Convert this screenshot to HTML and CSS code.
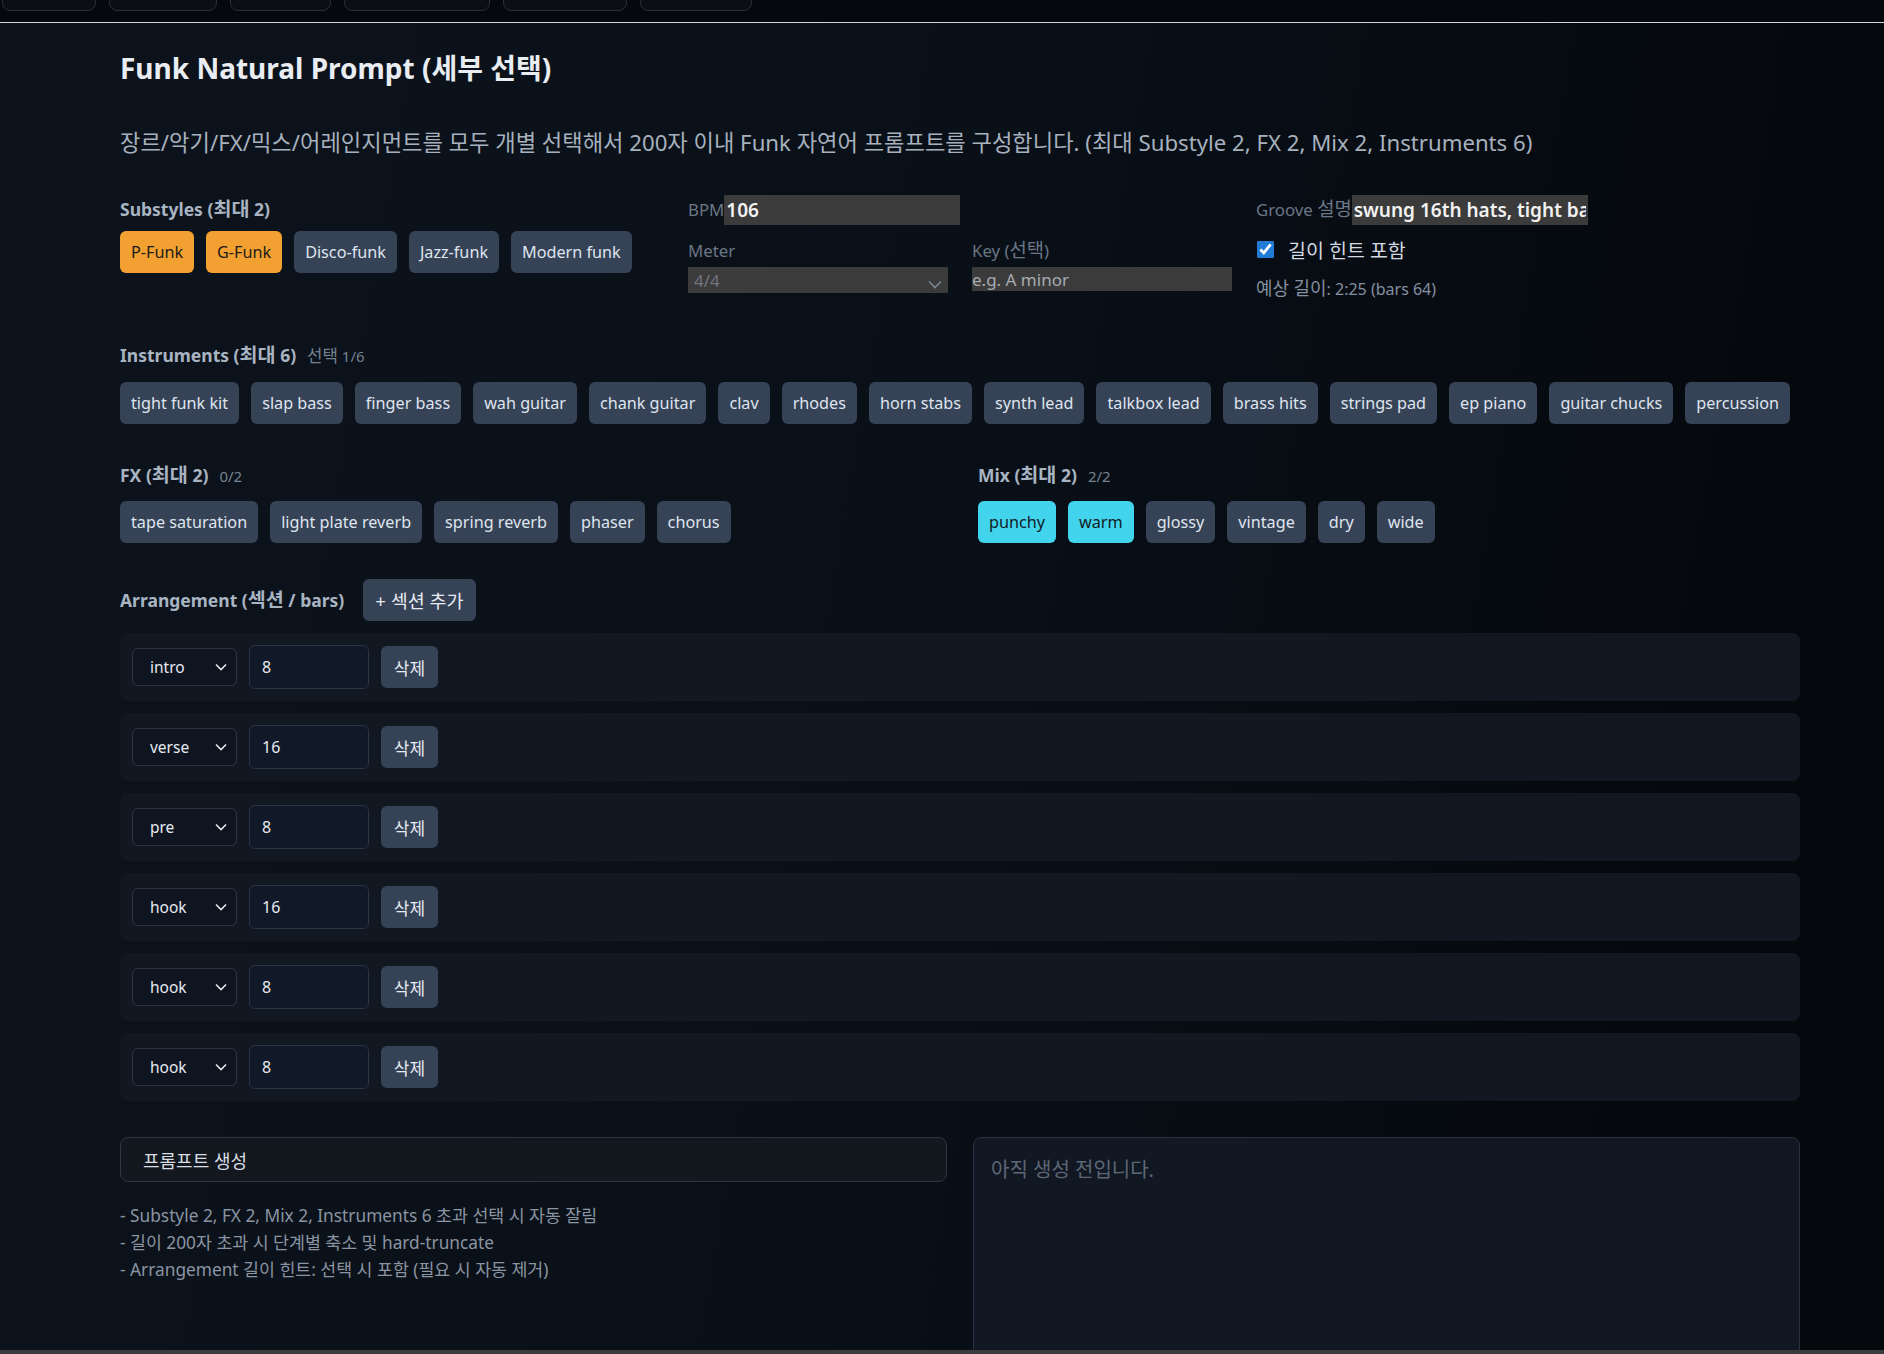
FILE: index.html
```html
<!DOCTYPE html>
<html lang="ko">
<head>
<meta charset="utf-8">
<title>Funk Natural Prompt</title>
<link rel="stylesheet" href="styles.css">
</head>
<body>
<div class="topbar">
  <div class="tabs">
    <span class="tab t1"></span><span class="tab t2"></span><span class="tab t3"></span><span class="tab t4"></span><span class="tab t5"></span><span class="tab t6"></span>
  </div>
</div>
<main class="page">
  <h1 class="title">Funk Natural Prompt (세부 선택)</h1>
  <p class="lead">장르/악기/FX/믹스/어레인지먼트를 모두 개별 선택해서 200자 이내 Funk 자연어 프롬프트를 구성합니다. (최대 Substyle 2, FX 2, Mix 2, Instruments 6)</p>

  <section class="grid3">
    <div class="col">
      <div class="label label-first">Substyles (<span class="ko">최대</span> 2)</div>
      <div class="chips">
        <button class="chip on-orange">P-Funk</button>
        <button class="chip on-orange">G-Funk</button>
        <button class="chip">Disco-funk</button>
        <button class="chip">Jazz-funk</button>
        <button class="chip">Modern funk</button>
      </div>
    </div>
    <div class="col">
      <div class="inline-field"><span class="flabel">BPM</span><input class="ginput bpm" value="106"></div>
      <div class="subgrid">
        <div>
          <div class="flabel block">Meter</div>
          <div class="selwrap meter">
            <select class="gselect"><option>4/4</option></select>
            <svg class="chev" width="14" height="9" viewBox="0 0 14 9"><path d="M1 1.5 L7 7.5 L13 1.5" fill="none" stroke="#7a8596" stroke-width="1.6"/></svg>
          </div>
        </div>
        <div>
          <div class="flabel block">Key (<span class="ko">선택</span>)</div>
          <input class="ginput key" placeholder="e.g. A minor">
        </div>
      </div>
    </div>
    <div class="col">
      <div class="inline-field"><span class="flabel">Groove <span class="ko">설명</span></span><input class="ginput groove" value="swung 16th hats, tight bass, clean chank guitar"></div>
      <label class="check"><input type="checkbox" checked><span>길이 힌트 포함</span></label>
      <div class="est"><span class="ko">예상 길이</span>: 2:25 (bars 64)</div>
    </div>
  </section>

  <section class="block-sec">
    <div class="label">Instruments (<span class="ko">최대</span> 6)<span class="count"><span class="ko">선택</span> 1/6</span></div>
    <div class="chips">
      <button class="chip">tight funk kit</button>
      <button class="chip">slap bass</button>
      <button class="chip">finger bass</button>
      <button class="chip">wah guitar</button>
      <button class="chip">chank guitar</button>
      <button class="chip">clav</button>
      <button class="chip">rhodes</button>
      <button class="chip">horn stabs</button>
      <button class="chip">synth lead</button>
      <button class="chip">talkbox lead</button>
      <button class="chip">brass hits</button>
      <button class="chip">strings pad</button>
      <button class="chip">ep piano</button>
      <button class="chip">guitar chucks</button>
      <button class="chip">percussion</button>
    </div>
  </section>

  <section class="grid2 fxmix">
    <div>
      <div class="label">FX (<span class="ko">최대</span> 2)<span class="count">0/2</span></div>
      <div class="chips">
        <button class="chip">tape saturation</button>
        <button class="chip">light plate reverb</button>
        <button class="chip">spring reverb</button>
        <button class="chip">phaser</button>
        <button class="chip">chorus</button>
      </div>
    </div>
    <div>
      <div class="label">Mix (<span class="ko">최대</span> 2)<span class="count">2/2</span></div>
      <div class="chips">
        <button class="chip on-cyan">punchy</button>
        <button class="chip on-cyan">warm</button>
        <button class="chip">glossy</button>
        <button class="chip">vintage</button>
        <button class="chip">dry</button>
        <button class="chip">wide</button>
      </div>
    </div>
  </section>

  <section class="arr">
    <div class="arr-head">
      <span class="label">Arrangement (<span class="ko">섹션</span> / bars)</span>
      <button class="btn add">+ 섹션 추가</button>
    </div>
    <div class="rows">
      <div class="row">
        <div class="selwrap sec"><select class="dselect"><option>intro</option></select><svg class="chev" width="12" height="8" viewBox="0 0 12 8"><path d="M1 1.5 L6 6.5 L11 1.5" fill="none" stroke="#e6e9ef" stroke-width="1.6"/></svg></div>
        <input class="dinput" value="8">
        <button class="btn del">삭제</button>
      </div>
      <div class="row">
        <div class="selwrap sec"><select class="dselect"><option>verse</option></select><svg class="chev" width="12" height="8" viewBox="0 0 12 8"><path d="M1 1.5 L6 6.5 L11 1.5" fill="none" stroke="#e6e9ef" stroke-width="1.6"/></svg></div>
        <input class="dinput" value="16">
        <button class="btn del">삭제</button>
      </div>
      <div class="row">
        <div class="selwrap sec"><select class="dselect"><option>pre</option></select><svg class="chev" width="12" height="8" viewBox="0 0 12 8"><path d="M1 1.5 L6 6.5 L11 1.5" fill="none" stroke="#e6e9ef" stroke-width="1.6"/></svg></div>
        <input class="dinput" value="8">
        <button class="btn del">삭제</button>
      </div>
      <div class="row">
        <div class="selwrap sec"><select class="dselect"><option>hook</option></select><svg class="chev" width="12" height="8" viewBox="0 0 12 8"><path d="M1 1.5 L6 6.5 L11 1.5" fill="none" stroke="#e6e9ef" stroke-width="1.6"/></svg></div>
        <input class="dinput" value="16">
        <button class="btn del">삭제</button>
      </div>
      <div class="row">
        <div class="selwrap sec"><select class="dselect"><option>hook</option></select><svg class="chev" width="12" height="8" viewBox="0 0 12 8"><path d="M1 1.5 L6 6.5 L11 1.5" fill="none" stroke="#e6e9ef" stroke-width="1.6"/></svg></div>
        <input class="dinput" value="8">
        <button class="btn del">삭제</button>
      </div>
      <div class="row">
        <div class="selwrap sec"><select class="dselect"><option>hook</option></select><svg class="chev" width="12" height="8" viewBox="0 0 12 8"><path d="M1 1.5 L6 6.5 L11 1.5" fill="none" stroke="#e6e9ef" stroke-width="1.6"/></svg></div>
        <input class="dinput" value="8">
        <button class="btn del">삭제</button>
      </div>
    </div>
  </section>

  <section class="grid2 bottom">
    <div>
      <button class="gen">프롬프트 생성</button>
      <ul class="notes">
        <li>- Substyle 2, FX 2, Mix 2, Instruments 6 초과 선택 시 자동 잘림</li>
        <li>- 길이 200자 초과 시 단계별 축소 및 hard-truncate</li>
        <li>- Arrangement 길이 힌트: 선택 시 포함 (필요 시 자동 제거)</li>
      </ul>
    </div>
    <div class="output">아직 생성 전입니다.</div>
  </section>
</main>
<div class="hbar"></div>
</body>
</html>
```

FILE: styles.css
```css
html, body {
  margin: 0;
  padding: 0;
  height: 1354px;
  overflow: hidden;
}
body {
  background: linear-gradient(100deg, #0c131c 0%, #091018 45%, #04070b 100%);
  font-family: "Noto Sans", "Noto Sans CJK KR", sans-serif;
  color: #e2e8f0;
}
.ko { font-size: 1.12em; line-height: 1; }

/* top tab strip */
.topbar {
  height: 22px;
  background: #05080c;
  border-bottom: 1px solid #d2d6db;
  overflow: hidden;
}
.tabs {
  display: flex;
  margin-top: -20px;
}
.tab {
  display: block;
  height: 29px;
  background: #0b0f15;
  border: 1px solid #2a2f37;
  border-radius: 0 0 8px 8px;
  margin-right: 13px;
}
.t1 { width: 92px; margin-left: 2px; }
.t2 { width: 106px; }
.t3 { width: 99px; }
.t4 { width: 144px; }
.t5 { width: 122px; }
.t6 { width: 110px; }

.page {
  width: 1680px;
  padding-left: 120px;
}

.title {
  margin: 28px 0 0;
  font-size: 28px;
  line-height: 34px;
  font-weight: 700;
  color: #e9edf2;
}
.lead {
  margin: 44px 0 0;
  font-size: 22.2px;
  line-height: 28px;
  color: #a7b1be;
  white-space: nowrap;
}

.grid3 {
  margin-top: 38px;
  display: grid;
  grid-template-columns: 1fr 1fr 1fr;
  column-gap: 24px;
  align-items: start;
}

.label {
  font-size: 17.5px;
  line-height: 28px;
  font-weight: 700;
  color: #a9b4c2;
}
.count {
  font-size: 15px;
  font-weight: 400;
  color: #76818f;
  margin-left: 11px;
}
.label-first { margin-bottom: 8px; }

.chips {
  display: flex;
  flex-wrap: wrap;
  gap: 12px;
}
.chip {
  height: 42px;
  padding: 0 11px;
  border: none;
  border-radius: 6px;
  background: #364256;
  color: #dfe5ee;
  font-family: inherit;
  font-size: 16.2px;
  line-height: 42px;
}
.chip.on-orange { background: #f2a031; color: #1c1a17; }
.chip.on-cyan { background: #42d3ed; color: #0f1c24; }

.inline-field {
  display: flex;
  align-items: center;
  height: 30px;
}
.flabel {
  font-size: 16.8px;
  color: #6b7686;
  line-height: 24px;
}
.flabel.block {
  display: block;
  margin-top: 14px;
}
.ginput {
  border: none;
  outline: none;
  background: #3b3b3b;
  color: #f2f2f2;
  font-family: inherit;
  padding: 0 2px;
  box-sizing: border-box;
}
.ginput.bpm, .ginput.groove {
  width: 236px;
  height: 30px;
  font-size: 19px;
  font-weight: 600;
}
.subgrid {
  display: grid;
  grid-template-columns: 1fr 1fr;
  column-gap: 24px;
}
.selwrap { position: relative; }
.gselect {
  -webkit-appearance: none;
  appearance: none;
  width: 100%;
  height: 26px;
  margin-top: 4px;
  border: none;
  background: #3b3b3b;
  color: #6f7580;
  font-family: inherit;
  font-size: 17px;
  padding: 0 6px;
  display: block;
}
.meter .chev { position: absolute; right: 6px; top: 13px; pointer-events: none; }
.ginput.key {
  width: 100%;
  height: 24px;
  margin-top: 4px;
  font-size: 17px;
  padding: 0;
  display: block;
}
.ginput.key::placeholder { color: #a6abb2; }

.check {
  display: flex;
  align-items: center;
  gap: 14px;
  margin-top: 12px;
  height: 24px;
  font-size: 19.5px;
  color: #d3d9e1;
}
.check input {
  width: 17px;
  height: 17px;
  margin: 0 0 0 1px;
  accent-color: #1f7bd6;
}
.est {
  margin-top: 18px;
  font-size: 16px;
  line-height: 20px;
  color: #8590a0;
}

.block-sec { margin-top: 42px; }
.block-sec .label { margin-bottom: 12px; }

.grid2 {
  display: grid;
  grid-template-columns: 1fr 1fr;
}
.fxmix {
  margin-top: 37px;
  column-gap: 36px;
}
.fxmix .label { margin-bottom: 11px; }

.arr { margin-top: 36px; }
.arr-head {
  display: flex;
  align-items: center;
  gap: 19px;
  height: 42px;
}
.btn {
  height: 42px;
  padding: 0 12px;
  border: none;
  border-radius: 6px;
  background: #364256;
  color: #e6ebf2;
  font-family: inherit;
  font-size: 17px;
}
.btn.add { font-size: 18.5px; }
.rows {
  margin-top: 12px;
  display: flex;
  flex-direction: column;
  gap: 12px;
}
.row {
  height: 68px;
  box-sizing: border-box;
  padding: 0 12px;
  display: flex;
  align-items: center;
  gap: 12px;
  background: #111822;
  border-radius: 8px;
}
.dselect {
  -webkit-appearance: none;
  appearance: none;
  width: 105px;
  height: 38px;
  box-sizing: border-box;
  border: 1px solid #2c3546;
  border-radius: 6px;
  background: #0e1520;
  color: #e6e9ef;
  font-family: inherit;
  font-size: 15.5px;
  padding: 0 0 0 17px;
  display: block;
}
.sec .chev { position: absolute; right: 10px; top: 15px; pointer-events: none; }
.dinput {
  width: 120px;
  height: 44px;
  box-sizing: border-box;
  border: 1px solid #2a3447;
  border-radius: 6px;
  background: #111827;
  color: #e6e9ef;
  font-family: inherit;
  font-size: 16px;
  padding: 0 12px;
  outline: none;
}
.btn.del { width: 57px; padding: 0; }

.bottom {
  margin-top: 36px;
  column-gap: 26px;
}
.gen {
  width: 100%;
  height: 45px;
  box-sizing: border-box;
  text-align: left;
  padding: 0 22px;
  border: 1px solid #2f3641;
  border-radius: 8px;
  background: #13181f;
  color: #d9dee5;
  font-family: inherit;
  font-size: 18px;
}
.notes {
  list-style: none;
  margin: 20px 0 0;
  padding: 0;
  font-size: 17.3px;
  line-height: 27px;
  color: #8a94a2;
}
.output {
  height: 300px;
  box-sizing: border-box;
  border: 1px solid #283242;
  border-radius: 8px;
  background: #111823;
  padding: 20px 17px;
  font-size: 20px;
  line-height: 24px;
  color: #5d6775;
}

.hbar {
  position: fixed;
  left: 0;
  right: 0;
  bottom: 0;
  height: 4px;
  background: #3a3b3d;
}
```
